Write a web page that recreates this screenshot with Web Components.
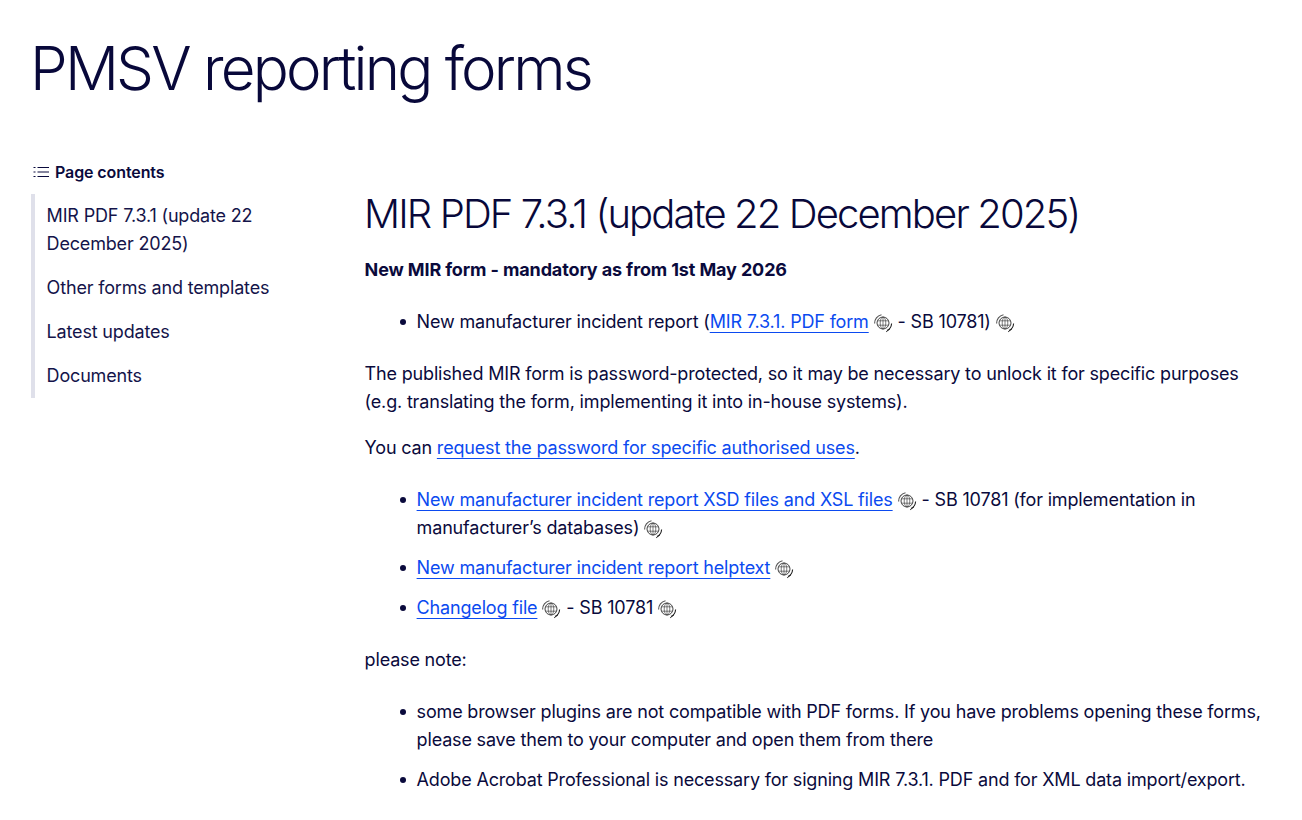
<!DOCTYPE html>
<html lang="en"><head><meta charset="utf-8"><title>PMSV reporting forms</title>
<style>
html,body{margin:0;padding:0;background:#fff;overflow:hidden;height:820px}
body{font-family:Inter,"Liberation Sans",sans-serif;color:#0a0a3c}
a{color:#0b4af0;text-decoration:underline;text-decoration-thickness:1px;text-underline-offset:4px}
pm-toc a{color:#14144a;text-decoration:none;display:block}
</style></head><body>
<template id="t-page"><style>
:host{display:block;padding:0 32px;height:820px;overflow:hidden;box-sizing:border-box}
.title{padding-top:30px;height:164px;box-sizing:border-box}
.cols{display:grid;grid-template-columns:332.6px 1fr}
</style><div class="title"><slot name="title"></slot></div><div class="cols"><slot name="side"></slot><slot></slot></div></template>

<template id="t-toc"><style>
:host{display:block;font-size:18px;line-height:28px;letter-spacing:-.17px}
.head{display:flex;align-items:center;gap:6px;font-size:16px;font-weight:600;letter-spacing:-.1px;line-height:20px;height:20px;margin-top:-2px;color:#0a0a3c;padding-left:1px}
svg{width:16px;height:16px;display:block}
.list{margin-top:12px;border-left:4px solid #dfe0ea;width:260px;padding:8px 0 8px 11.6px;display:flex;flex-direction:column;gap:16px;margin-left:-1px}
</style><div class="head"><svg viewBox="0 0 16 16" fill="none" stroke="currentColor" stroke-width="1"><path d="M4.5 3.5H16M4.5 8H16M4.5 12.5H16"/><path d="M.5 3.5h2M.5 8h2M.5 12.5h2"/></svg><span>Page contents</span></div><div class="list"><slot></slot></div></template>

<template id="t-ext"><style>
:host{display:inline-block;vertical-align:-5px;margin-left:4px;width:20px;height:20px;line-height:0}
svg{display:block}
</style><svg width="20" height="20" viewBox="0 0 20 20" fill="none" stroke="#444"><circle cx="10" cy="10" r="6" stroke-width="1"/><ellipse cx="10" cy="10" rx="2.8" ry="6" stroke-width=".7"/><path d="M4.4 7.8h11.2M4.4 12.2h11.2M10 4v12" stroke-width=".7"/><path d="M1.6 10.5A8.6 8.6 0 0 1 8.5 1.7" stroke="#555" stroke-width="1.1"/><path d="M18.6 10.5A8.6 8.6 0 0 1 14 17.6" stroke="#222" stroke-width="1.1"/><path d="M17 15.8l-3.8 3" stroke="#222" stroke-width="1"/></svg></template>

<script>
function def(name,id){customElements.define(name,class extends HTMLElement{constructor(){super();this.attachShadow({mode:"open"}).appendChild(document.getElementById(id).content.cloneNode(true));}});}
def("pm-page","t-page");def("pm-toc","t-toc");def("pm-ext","t-ext");
customElements.define("pm-title",class extends HTMLElement{constructor(){super();this.attachShadow({mode:"open"}).innerHTML='<style>:host{display:block}h1{margin:0;margin-left:-2px;font-size:60px;line-height:76px;font-weight:300;color:#08083a;letter-spacing:-2.8px}</style><h1><slot></slot></h1>';}});
customElements.define("pm-article",class extends HTMLElement{constructor(){super();this.attachShadow({mode:"open"}).innerHTML=`<style>
:host{display:block;font-size:18px;line-height:28px;color:#0a0a3c;letter-spacing:-.17px}
::slotted(pm-p.lead){letter-spacing:-.13px}
</style><slot></slot>`;}});
customElements.define("pm-h2",class extends HTMLElement{constructor(){super();this.attachShadow({mode:"open"}).innerHTML='<style>:host{display:block;margin-top:22px;margin-bottom:14px}h2{margin:0;margin-left:-.6px;font-size:40px;line-height:56px;font-weight:300;color:#08083a;letter-spacing:-1.87px}</style><h2><slot></slot></h2>';}});
customElements.define("pm-p",class extends HTMLElement{constructor(){super();this.attachShadow({mode:"open"}).innerHTML='<style>:host{display:block;margin:0 0 18px}</style><slot></slot>';}});
customElements.define("pm-ul",class extends HTMLElement{constructor(){super();this.attachShadow({mode:"open"}).innerHTML='<style>:host{display:flex;flex-direction:column;gap:12px;margin:24px 0;padding-left:52px}</style><slot></slot>';}});
customElements.define("pm-li",class extends HTMLElement{constructor(){super();this.attachShadow({mode:"open"}).innerHTML='<style>:host{display:block;position:relative}.b{position:absolute;left:-17px;top:11px;width:6px;height:6px;border-radius:50%;background:#0a0a3c}</style><span class="b"></span><slot></slot>';}});
</script>

<pm-page>
<pm-title slot="title">PMSV reporting forms</pm-title>
<pm-toc slot="side"><a>MIR PDF 7.3.1 (update 22 December 2025)</a><a>Other forms and templates</a><a>Latest updates</a><a>Documents</a></pm-toc>
<pm-article>
<pm-h2>MIR PDF 7.3.1 (update 22 December 2025)</pm-h2>
<pm-p class="lead"><strong>New MIR form - mandatory as from 1st May 2026</strong></pm-p>
<pm-ul><pm-li>New manufacturer incident report (<a href="#">MIR 7.3.1. PDF form</a><pm-ext></pm-ext> - SB 10781)<pm-ext></pm-ext></pm-li></pm-ul>
<pm-p>The published MIR form is password-protected, so it may be necessary to unlock it for specific purposes (e.g. translating the form, implementing it into in-house systems).</pm-p>
<pm-p>You can <a href="#">request the password for specific authorised uses</a>.</pm-p>
<pm-ul><pm-li><a href="#">New manufacturer incident report XSD files and XSL files</a><pm-ext></pm-ext> - SB 10781 (for implementation in<br>manufacturer’s databases)<pm-ext></pm-ext></pm-li>
<pm-li><a href="#">New manufacturer incident report helptext</a><pm-ext></pm-ext></pm-li>
<pm-li><a href="#">Changelog file</a><pm-ext></pm-ext> - SB 10781<pm-ext></pm-ext></pm-li></pm-ul>
<pm-p>please note:</pm-p>
<pm-ul><pm-li>some browser plugins are not compatible with PDF forms. If you have problems opening these forms, please save them to your computer and open them from there</pm-li>
<pm-li>Adobe Acrobat Professional is necessary for signing MIR 7.3.1. PDF and for XML data import/export.</pm-li></pm-ul>
</pm-article>
</pm-page>
</body></html>
